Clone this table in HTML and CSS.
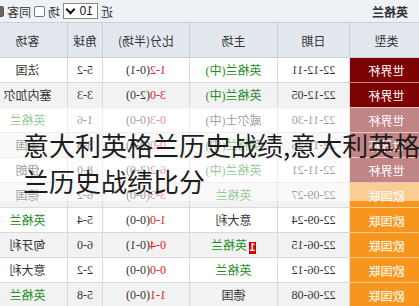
FILE: index.html
```html
<!DOCTYPE html>
<html lang="zh-CN">
<head>
<meta charset="utf-8">
<title>意大利英格兰历史战绩</title>
<link rel="stylesheet" href="styles.css">
</head>
<body>
<div class="page">
  <div class="flip">
    <div class="topbar">
      <span class="team">英格兰</span>
      <div class="filters">
        <span>近</span>
        <span class="select"><span class="num">10</span><span class="arrow"></span></span>
        <span>场</span>
        <span class="cb"></span>
        <span>同客</span>
        <span class="cb dark"></span>
      </div>
    </div>
    <table class="grid">
      <colgroup>
        <col class="c-type"><col class="c-date"><col class="c-home"><col class="c-score"><col class="c-corner"><col class="c-away">
      </colgroup>
      <thead>
        <tr><th>类型</th><th>日期</th><th>主场</th><th>比分(半场)</th><th>角球</th><th>客场</th></tr>
      </thead>
      <tbody>
        <tr><td class="wc">世界杯</td><td>22-12-11</td><td class="g">英格兰(中)</td><td><span class="r">1-2</span>(0-1)</td><td>5-2</td><td>法国</td></tr>
        <tr><td class="wc">世界杯</td><td>22-12-05</td><td class="g">英格兰(中)</td><td><span class="r">3-0</span>(2-0)</td><td>3-3</td><td>塞内加尔</td></tr>
        <tr><td class="wc">世界杯</td><td>22-11-30</td><td>威尔士(中)</td><td><span class="r">0-3</span>(0-0)</td><td>1-6</td><td class="g">英格兰</td></tr>
        <tr><td class="wc">世界杯</td><td>22-11-26</td><td class="g">英格兰(中)</td><td><span class="r">0-0</span>(0-0)</td><td>3-8</td><td>美国</td></tr>
        <tr><td class="wc">世界杯</td><td>22-11-21</td><td class="g">英格兰(中)</td><td><span class="r">6-2</span>(3-0)</td><td>8-0</td><td>伊朗</td></tr>
        <tr><td class="nl">欧国联</td><td>22-09-27</td><td class="g">英格兰</td><td><span class="r">3-3</span>(0-0)</td><td>6-2</td><td>德国</td></tr>
        <tr><td class="nl">欧国联</td><td>22-09-24</td><td>意大利</td><td><span class="r">1-0</span>(0-0)</td><td>5-4</td><td class="g">英格兰</td></tr>
        <tr><td class="nl">欧国联</td><td>22-06-15</td><td class="g"><span class="card">1</span>英格兰</td><td><span class="r">0-4</span>(0-1)</td><td>6-0</td><td>匈牙利</td></tr>
        <tr><td class="nl">欧国联</td><td>22-06-12</td><td class="g">英格兰</td><td><span class="r">0-0</span>(0-0)</td><td>2-2</td><td>意大利</td></tr>
        <tr><td class="nl">欧国联</td><td>22-06-08</td><td>德国</td><td><span class="r">1-1</span>(0-0)</td><td>5-8</td><td class="g">英格兰</td></tr>
      </tbody>
    </table>
  </div>
  <div class="overlay">意大利英格兰历史战绩,意大利英格<br>兰历史战绩比分</div>
</div>
</body>
</html>
```
FILE: styles.css
```css
html, body {
  margin: 0;
  padding: 0;
  background: #fff;
}
.page {
  position: relative;
  width: 419px;
  height: 306px;
  overflow: hidden;
  font-family: "Liberation Serif", "Noto Sans CJK SC", serif;
  font-size: 12px;
  color: #333;
}
.flip {
  width: 419px;
  overflow: hidden;
  transform: scaleX(-1);
}
.topbar {
  height: 22px;
  display: flex;
  align-items: center;
  background: #eef1f6;
  padding-left: 11px;
  font-family: "Noto Sans CJK SC", sans-serif;
  font-size: 12px;
  color: #333;
}
.team {
  font-weight: bold;
}
.filters {
  margin-left: auto;
  margin-right: -7px;
  display: flex;
  align-items: center;
  gap: 3px;
}
.select {
  width: 35px;
  height: 16px;
  box-sizing: border-box;
  border: 1px solid #888;
  background: #fff;
  display: flex;
  align-items: center;
  justify-content: space-between;
  padding: 0 3px 0 4px;
  font-family: "Liberation Sans", sans-serif;
  font-size: 12px;
  color: #111;
}
.arrow {
  width: 5px;
  height: 5px;
  border-right: 2px solid #111;
  border-bottom: 2px solid #111;
  transform: translateY(-2px) rotate(45deg);
}
.cb {
  width: 11px;
  height: 11px;
  box-sizing: border-box;
  border: 1px solid #777;
  background: #fff;
  border-radius: 2px;
}
.cb.dark {
  background: #666;
  border-color: #555;
}
.grid {
  table-layout: fixed;
  width: 436px;
  margin-left: -5px;
  border-collapse: collapse;
}
.c-type { width: 74px; }
.c-date { width: 72px; }
.c-home { width: 88px; }
.c-score { width: 87px; }
.c-corner { width: 35px; }
.c-away { width: 80px; }
.grid th {
  height: 34px;
  background: #e3e8ef;
  border: 1px solid #c9d0da;
  font-family: "Noto Sans CJK SC", sans-serif;
  font-weight: normal;
  font-size: 12px;
  color: #333;
  padding: 0;
}
.grid td {
  height: 24px;
  padding: 0;
  border: 1px solid #d9d9d9;
  text-align: center;
  white-space: nowrap;
  color: #333;
}
.grid tbody tr:nth-child(even) td {
  background: #f2f2f2;
}
.grid td.wc,
.grid tbody tr:nth-child(even) td.wc {
  background: #7d0202;
  color: #fff;
  border-top-color: #c98a8a;
  border-bottom-color: #c98a8a;
  font-family: "Noto Sans CJK SC", sans-serif;
}
.grid td.nl,
.grid tbody tr:nth-child(even) td.nl {
  background: #f7961e;
  color: #fff;
  border-top-color: #fbc98a;
  border-bottom-color: #fbc98a;
  font-family: "Noto Sans CJK SC", sans-serif;
}
.g {
  color: #1f8f1f !important;
}
.r {
  color: #e02020;
}
.card {
  display: inline-block;
  width: 7px;
  height: 12px;
  line-height: 12px;
  margin-right: 2px;
  background: #d40000;
  color: #fff;
  font-family: "Liberation Sans", sans-serif;
  font-size: 10px;
  font-weight: bold;
  vertical-align: -1px;
}
.overlay {
  position: absolute;
  left: 0;
  top: 107px;
  width: 419px;
  height: 94px;
  box-sizing: border-box;
  padding: 20px 0 0 23px;
  background: rgba(255, 255, 255, 0.52);
  font-family: "Noto Sans CJK SC", sans-serif;
  font-size: 26px;
  line-height: 36px;
  color: #1c1c1c;
  white-space: nowrap;
}
```
